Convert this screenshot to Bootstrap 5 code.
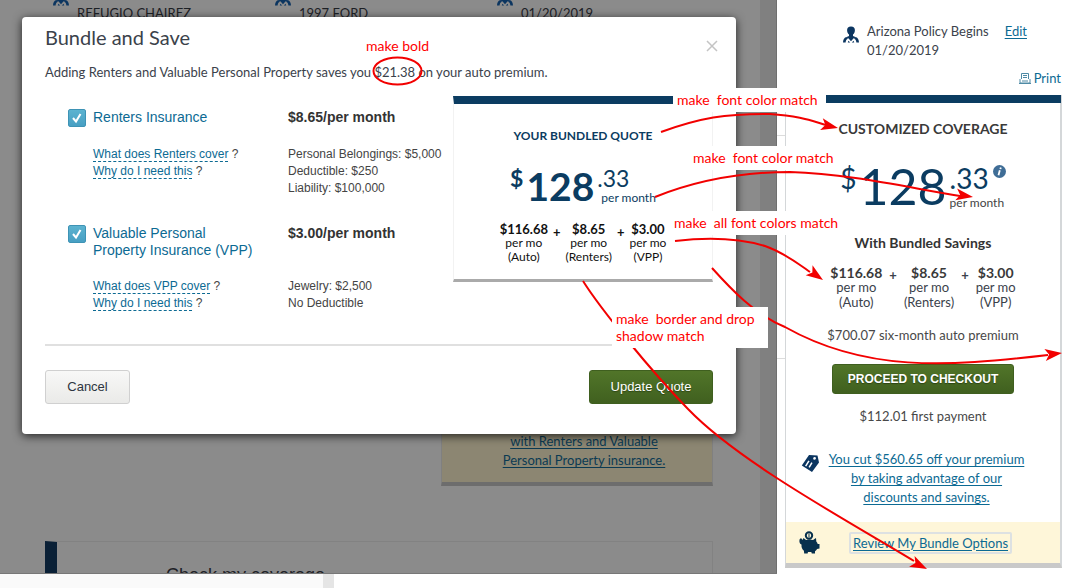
<!DOCTYPE html>
<html lang="en">
<head>
<meta charset="utf-8">
<meta name="viewport" content="width=device-width, initial-scale=1">
<title>Bundle and Save</title>
<link href="https://cdn.jsdelivr.net/npm/bootstrap@5.3.0/dist/css/bootstrap.min.css" rel="stylesheet">
<style>
:root { --navy:#0b3c61; --link:#0c6a93; --ink:#3b424b; --soft:#484848; }
body { font-family:Lato,"Open Sans",sans-serif; font-size:13px; line-height:19px; color:var(--ink); background:#fff; overflow:hidden; }
a { color:var(--link); text-underline-offset:2px; }
.arial { font-family:"Liberation Sans",Arial,sans-serif; }

/* dimmed page behind the dialog */
.pane { min-height:0; background:linear-gradient(to left,#6f6f6f 1px,#808080 1px,#808080 17px,#8b8b8b 17px); border-bottom:1px solid #777; color:#1d2126; }
.scrolled { margin-top:-15px; }
.facts { padding-left:53px; grid-template-columns:repeat(3,222px); }
.facts div { min-height:38px; }
.offer { width:272px; min-height:186px; margin:277px 64px 0 auto; padding:0 0 12px 14px; background:#8c8672; border:1px solid #808080; border-bottom:4px solid #6d6d6d; }
.offer a { color:#0b3a52; }
.coverage { margin:55px 64px 0 45px; border:1px solid #828282; border-left:12px solid #0a2036; padding:22px 0 20px 109px; font-size:18px; line-height:22px; }
.strip { height:15px; background:#fff; }
.strip span { width:323px; background:#fafafa; }
.strip i { width:11px; background:#e5e5e5; }

/* dialog */
.dialog-box { top:17px; left:22px; right:41px; padding:8px 23px 30px; background:#fff; color:var(--ink); border-radius:4px; box-shadow:0 2px 10px rgba(0,0,0,.75); }
.dialog-box h1 { font-size:20px; line-height:24px; font-weight:400; color:var(--ink); }
.lead-line { margin-top:11px; line-height:18px; }
.closer { width:12px; height:12px; margin:15px -5px 0 0; }
.body-row { margin-top:15px; }
.plans { padding:9px 0 0 23px; }
.plan { display:grid; grid-template-columns:25px 195px 1fr; line-height:17px; }
.plan .title { font-size:14px; color:var(--link); }
.plan .cost { font-size:14px; font-weight:700; color:#333; }
.plan .info { font-size:12px; color:#444; margin-top:19px; }
.plan .info a { text-decoration:none; border-bottom:1px dashed var(--link); }
.tick { appearance:none; width:18px; height:18px; margin:0; border:1px solid #3e93b5; border-radius:2px; background:linear-gradient(#5cb3d0,#479fc3); }
.tick:checked { background:url("data:image/svg+xml,%3Csvg xmlns='http://www.w3.org/2000/svg' viewBox='0 0 16 16'%3E%3Cpath d='M4 8l3 3.5L11.5 4' fill='none' stroke='white' stroke-width='2'/%3E%3C/svg%3E") center/16px,linear-gradient(#5cb3d0,#479fc3); }
.quote { width:260px; height:186px; border:1px solid #f2f2f2; border-top:8px solid var(--navy); border-bottom:3px solid #aaa; }
.quote h2 { margin:23px 0 0; font-size:12px; line-height:18px; font-weight:700; color:var(--navy); }
.price { color:var(--navy); }
.price .minor { font-size:23px; line-height:24px; }
.price .major { font-size:39px; line-height:40px; font-weight:700; }
.price .per { font-size:12px; line-height:16px; }
.quote .price { margin-top:21px; gap:3px; }
.split { text-align:center; }
.split b { display:block; font-size:13px; line-height:13px; }
.split span { display:block; font-size:12px; line-height:14px; }
.split em { font-style:normal; font-weight:700; }
.quote .split { color:#111; margin-top:17px; gap:5px; }
.rule { margin:32px 0 24px; border-top:2px solid #e0e0e0; }
.btn-plain, .btn-go { height:34px; font-size:13px; line-height:18px; border-radius:3px; padding:0; }
.btn-plain { width:85px; color:#2d3540; background:linear-gradient(#f8f8f7,#eaeae8); border:1px solid #d0d0d0; }
.btn-go { width:124px; color:#fff; background:linear-gradient(#517529,#40601f); border:1px solid #3f5f1f; text-shadow:0 1px 1px #2c4413; }

/* quote sidebar */
.side { position:relative; width:303px; padding:22px 18px 0 8px; }
.side::before { content:""; position:absolute; left:0; top:135px; width:8px; height:224px; border:solid #dcdcdc; border-width:1px 0; }
.begins { padding-left:58px; height:41px; }
.print-line { margin-top:6px; padding-right:1px; gap:3px; }
.total { margin-top:7px; border:solid #d4d7d9; border-width:0 2px 5px 1px; border-bottom-color:#c9c9c9; text-align:center; }
.total .bar { height:8px; margin:0 -1px; background:var(--navy); }
.total h2 { margin:17px 0 0; font-size:14px; line-height:18px; font-weight:700; color:#3a3a3a; }
.total .price { margin-top:23px; gap:3px; }
.total .price .minor { font-size:28px; line-height:34px; }
.total .price .major { font-size:50px; line-height:50px; font-weight:400; }
.total .price .per { color:#444; }
.total h3 { margin:23px 0 0; font-size:14px; line-height:18px; font-weight:700; color:#333; }
.total .split { margin-top:14px; gap:7px; }
.total .split b { font-size:14px; line-height:14px; color:#3a3a3a; }
.total .split span { font-size:13px; line-height:15px; }
.total .btn-go { width:182px; height:30px; font-size:12px; font-weight:700; margin-top:19px; }
.soft { color:var(--soft); }
.first-pay { margin-top:13px; }
.saved { margin:24px 0 0; padding:0 33px 15px 15px; gap:6px; }
.review { height:41px; background:#fef6d9; padding-left:13px; gap:29px; }
.review a { border:2px solid #dde1e2; border-radius:2px; padding:0 2px; line-height:18px; }

/* review notes drawn over the page */
.note { position:absolute; background:#fff; color:red; font-size:14px; line-height:17px; white-space:pre; padding:3px 4px; }
.arrows { position:absolute; left:0; top:0; width:1080px; height:588px; pointer-events:none; }
.n0 { left:362px; top:34px; background:none; }
.n1 { left:673px; top:88px; width:153px; height:24px; }
.n2 { left:689px; top:146px; height:24px; }
.n3 { left:670px; top:211px; height:24px; }
.n4 { left:612px; top:307px; width:156px; height:41px; }
</style>
</head>
<body>
<svg width="0" height="0" class="position-absolute" aria-hidden="true">
  <symbol id="person" viewBox="0 0 16 17"><g fill="#0b3560"><path d="M8 .5c2.600 0 4 1.500 3.900 3.800C11.900 6 11.200 7.600 10 8.600V10l3 1.200-2.600 1.200L8 15.200l-2.400-2.800L3 11.200 6 10V8.600C4.800 7.600 4.100 6 4.100 4.300 4 2 5.400.5 8 .5z"/><path d="M3.300 11l1.700 1.800C3.400 13.300 2.800 14.600 2.600 16.500H0C.2 13.500 1 11.800 3.300 11zM12.700 11L11 12.800c1.600.5 2.200 1.800 2.400 3.700H16c-.2-3-1-4.700-3.300-5.500zM4.800 16.500l.6-1.800 1.800 1.800zM11.200 16.500l-.6-1.800-1.800 1.800z"/></g></symbol>
</svg>

<div class="vh-100 position-relative d-flex">
  <div class="d-flex flex-column flex-grow-1">
    <main class="pane position-relative overflow-hidden flex-grow-1">
      <div class="scrolled">
        <div class="facts d-grid">
          <div class="d-flex gap-2"><svg width="16" height="17" class="mt-1"><use href="#person"/></svg><span class="align-self-end">REFUGIO CHAIREZ</span></div>
          <div class="d-flex gap-2"><svg width="16" height="17" class="mt-1"><use href="#person"/></svg><span class="align-self-end">1997 FORD</span></div>
          <div class="d-flex gap-2"><svg width="16" height="17" class="mt-1"><use href="#person"/></svg><span class="align-self-end">01/20/2019</span></div>
        </div>
        <div class="offer d-flex flex-column justify-content-end text-center"><a href="#">with Renters and Valuable<br>Personal Property insurance.</a></div>
        <div class="coverage arial">Check my coverage</div>
      </div>

      <section class="dialog-box position-absolute" role="dialog" aria-labelledby="dlg-title">
        <div class="d-flex justify-content-between">
          <h1 id="dlg-title" class="m-0">Bundle and Save</h1>
          <button type="button" class="closer btn p-0 border-0 d-flex" aria-label="Close"><svg width="12" height="12" viewBox="0 0 12 12"><path d="M1 1l10 10M11 1L1 11" stroke="#c4c4c4" stroke-width="1.500"/></svg></button>
        </div>
        <p class="lead-line mb-0">Adding Renters and Valuable Personal Property saves you $21.38 on your auto premium.</p>

        <div class="body-row d-flex">
          <div class="plans flex-grow-1 arial">
            <div class="plan pt-1">
              <input class="tick" type="checkbox" id="renters" checked>
              <label class="title" for="renters">Renters Insurance</label>
              <div class="cost">$8.65/per month</div>
              <span></span>
              <div class="info"><a href="#">What does Renters cover</a> ?<br><a href="#">Why do I need this</a> ?</div>
              <div class="info">Personal Belongings: $5,000<br>Deductible: $250<br>Liability: $100,000</div>
            </div>
            <div class="plan pt-4 mt-1">
              <input class="tick" type="checkbox" id="vpp" checked>
              <label class="title" for="vpp">Valuable Personal<br>Property Insurance (VPP)</label>
              <div class="cost">$3.00/per month</div>
              <span></span>
              <div class="info"><a href="#">What does VPP cover</a> ?<br><a href="#">Why do I need this</a> ?</div>
              <div class="info">Jewelry: $2,500<br>No Deductible</div>
            </div>
          </div>
          <div class="quote flex-shrink-0 text-center">
            <h2>YOUR BUNDLED QUOTE</h2>
            <div class="price d-flex justify-content-center">
              <span class="minor fw-bold">$</span><span class="major">128</span>
              <div class="text-start"><div class="minor">.33</div><div class="per ps-1">per month</div></div>
            </div>
            <div class="split d-flex justify-content-center">
              <div><b>$116.68</b><span>per mo</span><span>(Auto)</span></div><em>+</em>
              <div><b>$8.65</b><span>per mo</span><span>(Renters)</span></div><em>+</em>
              <div><b>$3.00</b><span>per mo</span><span>(VPP)</span></div>
            </div>
          </div>
        </div>
        <div class="rule"></div>
        <div class="d-flex justify-content-between arial">
          <button type="button" class="btn btn-plain">Cancel</button>
          <button type="button" class="btn btn-go">Update Quote</button>
        </div>
      </section>
    </main>
    <div class="strip d-flex"><span></span><i></i></div>
  </div>

  <aside class="side flex-shrink-0">
    <div class="begins d-flex gap-2">
      <svg width="16" height="17" class="mt-1 flex-shrink-0"><use href="#person"/></svg>
      <div>Arizona Policy Begins<br>01/20/2019</div>
      <a href="#" class="ms-2">Edit</a>
    </div>
    <div class="print-line d-flex justify-content-end align-items-center">
      <svg width="12" height="11" viewBox="0 0 12 11"><path d="M2.500 6V.5h7V6M4 2.500h4M4 4.500h4" fill="none" stroke="#4e8aa5"/><path d="M1 6v4h10V6M0 10.500h12M3 8h6" fill="none" stroke="#4e8aa5"/></svg>
      <a href="#" class="text-decoration-none">Print</a>
    </div>
    <section class="total">
      <div class="bar"></div>
      <h2>CUSTOMIZED COVERAGE</h2>
      <div class="price d-flex justify-content-center">
        <span class="minor">$</span><span class="major">128</span>
        <div class="text-start"><div class="d-flex"><span class="minor">.33</span><svg width="13" height="13" viewBox="0 0 13 13" class="mt-1 ms-1"><circle cx="6.500" cy="6.500" r="6.500" fill="#3f6d96"/><path d="M7.800 2.500l-.4 1.600M6.800 5.300l-1.300 5" stroke="#fff" stroke-width="1.800"/></svg></div><div class="per">per month</div></div>
      </div>
      <h3>With Bundled Savings</h3>
      <div class="split d-flex justify-content-center">
        <div><b>$116.68</b><span>per mo</span><span>(Auto)</span></div><em>+</em>
        <div><b>$8.65</b><span>per mo</span><span>(Renters)</span></div><em>+</em>
        <div><b>$3.00</b><span>per mo</span><span>(VPP)</span></div>
      </div>
      <div class="soft mt-3">$700.07 six-month auto premium</div>
      <button type="button" class="btn btn-go arial">PROCEED TO CHECKOUT</button>
      <div class="soft first-pay">$112.01 first payment</div>
      <div class="saved d-flex">
        <svg width="19" height="19" viewBox="0 0 19 19" class="flex-shrink-0 mt-1"><path fill="#0b3560" fill-rule="evenodd" d="M8 1l8.500.5 1.500 7L11 18 .8 11.500zM13.500 3a1.400 1.400 0 1 0 .1 2.800A1.400 1.400 0 0 0 13.500 3zM7.300 6.500L4 11.800l1.300.8L8.600 7.300zM10.300 8.300L7.500 13l1.300.8 2.800-4.700z"/></svg>
        <a href="#" class="flex-grow-1">You cut $560.65 off your premium<br>by taking advantage of our<br>discounts and savings.</a>
      </div>
      <div class="review d-flex align-items-center">
        <svg width="21" height="23" viewBox="0 0 21 23"><circle cx="10" cy="4.500" r="3.200" fill="#fef6d9" stroke="#07304d" stroke-width="2"/><path d="M10 2.500v4" stroke="#07304d"/><path fill="#07304d" d="M.5 8.500L2 7l1.500 2 1-2L7 9c2-.8 5-.8 7 0l3-2 .3 3.500c.8.800 1.200 1.500 1.400 2.500h1.800v4.500l-2.500.5c-.5 1-1 1.500-2 2.200V22.500h-3.200L12.300 21H9l-.4 1.500H5.200l-.3-2.800c-1.900-1.400-2.600-3.500-2.400-6.200C1 13 0 11.500.5 8.500z"/></svg>
        <a href="#">Review My Bundle Options</a>
      </div>
    </section>
  </aside>

  <svg class="arrows" viewBox="0 0 1080 588" aria-hidden="true">
    <g fill="none" stroke="#f20000" stroke-width="2">
      <ellipse cx="397.500" cy="71" rx="24" ry="13.500"/>
      <path d="M661 132C700 118 725 113.500 770 114C800 116 812 121 826 125"/>
      <path d="M655 197C690 183 735 172 790 172C850 174 905 187 960 196"/>
      <path d="M675 241C700 238 735 237 765 246C785 253 800 265 810 272"/>
      <path d="M712 268C730 288 755 315 785 327C865 372 945 367 1048 355"/>
      <path d="M583 281C600 308 650 370 688 409C740 463 850 522 914 561"/>
    </g>
    <g fill="#f20000">
      <path transform="translate(838 128) rotate(13)" d="M0 0L-17 6L-13 0L-17 -6Z"/>
      <path transform="translate(973 197) rotate(9)" d="M0 0L-17 6L-13 0L-17 -6Z"/>
      <path transform="translate(823 280) rotate(35)" d="M0 0L-17 6L-13 0L-17 -6Z"/>
      <path transform="translate(1062 353) rotate(-7)" d="M0 0L-17 6L-13 0L-17 -6Z"/>
      <path transform="translate(927 569) rotate(27)" d="M0 0L-17 6L-13 0L-17 -6Z"/>
    </g>
  </svg>
  <div class="note n0">make bold</div>
  <div class="note n1">make  font color match</div>
  <div class="note n2">make  font color match</div>
  <div class="note n3">make  all font colors match</div>
  <div class="note n4">make  border and drop
shadow match</div>
</div>
<script src="https://cdn.jsdelivr.net/npm/bootstrap@5.3.0/dist/js/bootstrap.bundle.min.js"></script>
</body>
</html>
